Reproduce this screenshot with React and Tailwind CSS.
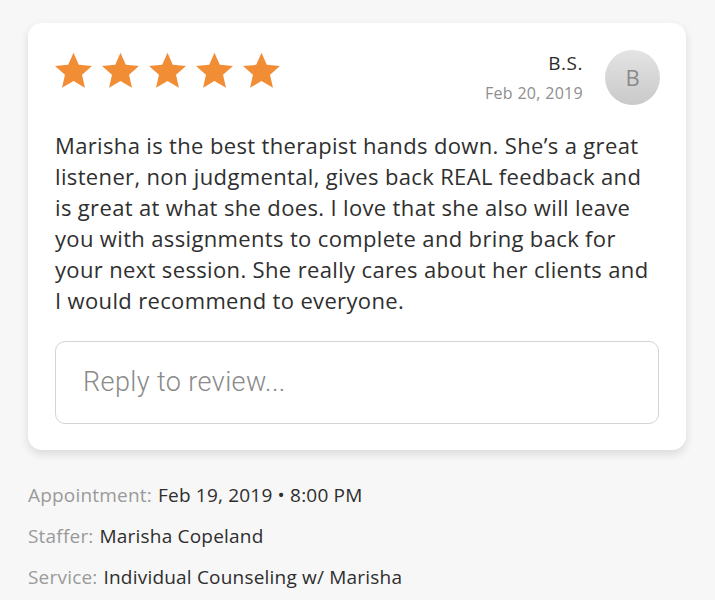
import React from 'react';

const Star = () => (
  <svg viewBox="0 0 24 24" className="w-[41px] h-[41px]" fill="#f08d35">
    <path d="M12 1.6l3.1 7.1 7.7.7-5.8 5.1 1.7 7.6L12 18.1l-6.7 4 1.7-7.6-5.8-5.1 7.7-.7z" />
  </svg>
);

const Row = ({ label, value }) => (
  <div className="flex items-baseline gap-[6px] text-[19px] leading-[41px] tracking-[0.2px]">
    <span className="text-[#9a9a9a]">{label}</span>
    <span className="text-[#2e2e2e]">{value}</span>
  </div>
);

export default function App() {
  return (
    <div
      className="min-h-[600px] bg-[#f7f7f7] pt-[23px] px-[28px]"
      style={{ fontFamily: '"Open Sans", Lato, sans-serif' }}
    >
      <div className="w-[658px] bg-white rounded-[14px] shadow-[0_4px_10px_rgba(0,0,0,0.12)] pl-[27px] pr-[27px] pt-[25px] pb-[26px]">
        <div className="flex items-start justify-between">
          <div className="flex gap-[6px] mt-[2px] -ml-[2px]">
            {[0, 1, 2, 3, 4].map((i) => (
              <Star key={i} />
            ))}
          </div>
          <div className="flex items-center gap-[22px]">
            <div className="flex flex-col items-end">
              <span className="text-[19px] leading-[26px] text-[#2b2b2b] tracking-[0.5px] mt-[2px]">B.S.</span>
              <span className="text-[16px] leading-[26px] text-[#8e8e8e] mt-[4px] tracking-[0.3px]">Feb 20, 2019</span>
            </div>
            <div className="w-[55px] h-[55px] rounded-full bg-gradient-to-b from-[#e4e4e4] to-[#c9c9c9] flex items-center justify-center text-[22px] text-[#8a8a8a] mr-[-1px]">
              B
            </div>
          </div>
        </div>
        <p className="mt-[24px] text-[22px] leading-[31px] text-[#2f2f2f] tracking-[0.35px] pr-[2px]">
          Marisha is the best therapist hands down. She’s a great listener, non judgmental, gives back REAL feedback and is great at what she does. I love that she also will leave you with assignments to complete and bring back for your next session. She really cares about her clients and I would recommend to everyone.
        </p>
        <div className="mt-[25px] h-[83px] border border-[#d4d4d4] rounded-[10px] flex items-center pl-[27px]">
          <span className="text-[27px] text-[#8a8a8a] tracking-[0.4px]" style={{ fontFamily: 'Roboto, sans-serif', fontWeight: 300 }}>
            Reply to review...
          </span>
        </div>
      </div>
      <div className="mt-[25px]">
        <Row label="Appointment:" value="Feb 19, 2019 • 8:00 PM" />
        <Row label="Staffer:" value="Marisha Copeland" />
        <Row label="Service:" value="Individual Counseling w/ Marisha" />
      </div>
    </div>
  );
}
